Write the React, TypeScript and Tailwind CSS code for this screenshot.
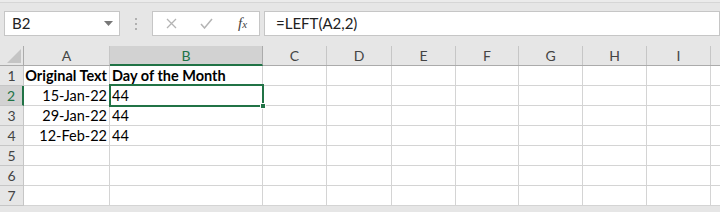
import React from 'react';

const cols = [
  { key: 'A', w: 'w-[86px]' },
  { key: 'B', w: 'w-[153px]' },
  { key: 'C', w: 'w-[64px]' },
  { key: 'D', w: 'w-[65px]' },
  { key: 'E', w: 'w-[64px]' },
  { key: 'F', w: 'w-[63px]' },
  { key: 'G', w: 'w-[64px]' },
  { key: 'H', w: 'w-[64px]' },
  { key: 'I', w: 'w-[64px]' },
  { key: 'J', w: 'w-[64px]' },
];

const data: Record<number, { a?: string; b?: string; bold?: boolean }> = {
  1: { a: 'Original Text', b: 'Day of the Month', bold: true },
  2: { a: '15-Jan-22', b: '44' },
  3: { a: '29-Jan-22', b: '44' },
  4: { a: '12-Feb-22', b: '44' },
};

const font = { fontFamily: 'Lato, "Open Sans", sans-serif' };

const App: React.FC = () => {
  return (
    <div className="w-[720px] h-[212px] bg-[#e6e6e6] overflow-hidden relative" style={font}>
      {/* formula bar */}
      <div className="h-[3px] bg-[#ebebeb] border-b border-[#d6d6d6]" />
      <div className="flex items-start pt-[8px] pl-[4px] h-[43px]">
        <div className="w-[116px] h-[25px] bg-white border border-[#c6c6c6] flex items-center justify-between pl-[7px] pr-[6px] text-[15px] text-[#222]">
          <span>B2</span>
          <svg width="9" height="5" viewBox="0 0 9 5"><path d="M0 0h9L4.5 5z" fill="#777" /></svg>
        </div>
        <div className="w-[32px] h-[25px] flex flex-col items-center justify-center gap-[3px]">
          <span className="w-[2px] h-[2px] bg-[#b0b0b0]" />
          <span className="w-[2px] h-[2px] bg-[#b0b0b0]" />
          <span className="w-[2px] h-[2px] bg-[#b0b0b0]" />
        </div>
        <div className="w-[108px] h-[25px] bg-white border border-[#c6c6c6] flex items-center">
          <svg className="ml-[13px]" width="11" height="11" viewBox="0 0 11 11">
            <path d="M1 1l9 9M10 1l-9 9" stroke="#b4b4b4" strokeWidth="1.3" />
          </svg>
          <svg className="ml-[23px]" width="13" height="11" viewBox="0 0 13 11">
            <path d="M1 6l3.5 4L12 1" stroke="#b4b4b4" strokeWidth="1.5" fill="none" />
          </svg>
          <span className="ml-[25px] text-[15px] italic text-[#444]" style={{ fontFamily: '"Liberation Serif", serif' }}>
            f<span className="text-[11px]">x</span>
          </span>
        </div>
        <div className="ml-[4px] flex-1 h-[25px] bg-white border border-[#c6c6c6] flex items-center pl-[11px] text-[15px] text-[#222]">
          =LEFT(A2,2)
        </div>
      </div>

      {/* grid */}
      <div className="flex flex-col">
        <div className="flex h-[20px] border-b border-[#ababab]">
          <div className="w-[24px] shrink-0 border-r border-[#ababab] flex items-end justify-end pr-[2px] pb-[2px]">
            <svg width="14" height="14" viewBox="0 0 14 14"><path d="M14 0v14H0z" fill="#c4c4c4" /></svg>
          </div>
          {cols.map((c) =>
            c.key === 'B' ? (
              <div key={c.key} className={`${c.w} shrink-0 bg-[#d2d2d2] border-r border-[#ababab] border-b-2 border-b-[#217346] -mb-[1px] flex items-center justify-center text-[14px] text-[#217346]`}>
                {c.key}
              </div>
            ) : (
              <div key={c.key} className={`${c.w} shrink-0 border-r border-[#c6c6c6] flex items-center justify-center text-[14px] text-[#444]`}>
                {c.key === 'J' ? null : c.key}
              </div>
            )
          )}
        </div>
        {[1, 2, 3, 4, 5, 6, 7].map((r) => {
          const row = data[r];
          return (
            <div key={r} className="flex h-[20px] bg-white">
              <div
                className={`w-[24px] shrink-0 border-b border-[#c6c6c6] flex items-center justify-center text-[14px] ${
                  r === 2 ? 'bg-[#d2d2d2] border-r-2 border-r-[#217346] text-[#217346]' : 'bg-[#e6e6e6] border-r border-[#ababab] text-[#444]'
                }`}
              >
                {r}
              </div>
              {cols.map((c) => (
                <div
                  key={c.key}
                  className={`${c.w} shrink-0 border-r border-b border-[#d4d4d4] flex items-center text-[14.5px] text-black whitespace-nowrap ${
                    c.key === 'A' ? 'justify-end pr-[2px]' : 'pl-[2px]'
                  } ${row?.bold ? 'font-bold' : ''}`}
                >
                  {c.key === 'A' ? row?.a : c.key === 'B' ? row?.b : null}
                </div>
              ))}
            </div>
          );
        })}
      </div>

      {/* selection box on B2 */}
      <div className="absolute left-[109px] top-[84px] w-[155px] h-[23px] border-2 border-[#217346] pointer-events-none">
        <div className="absolute -right-[4px] -bottom-[4px] w-[6px] h-[6px] bg-[#217346] border border-white" />
      </div>
    </div>
  );
};

export default App;
